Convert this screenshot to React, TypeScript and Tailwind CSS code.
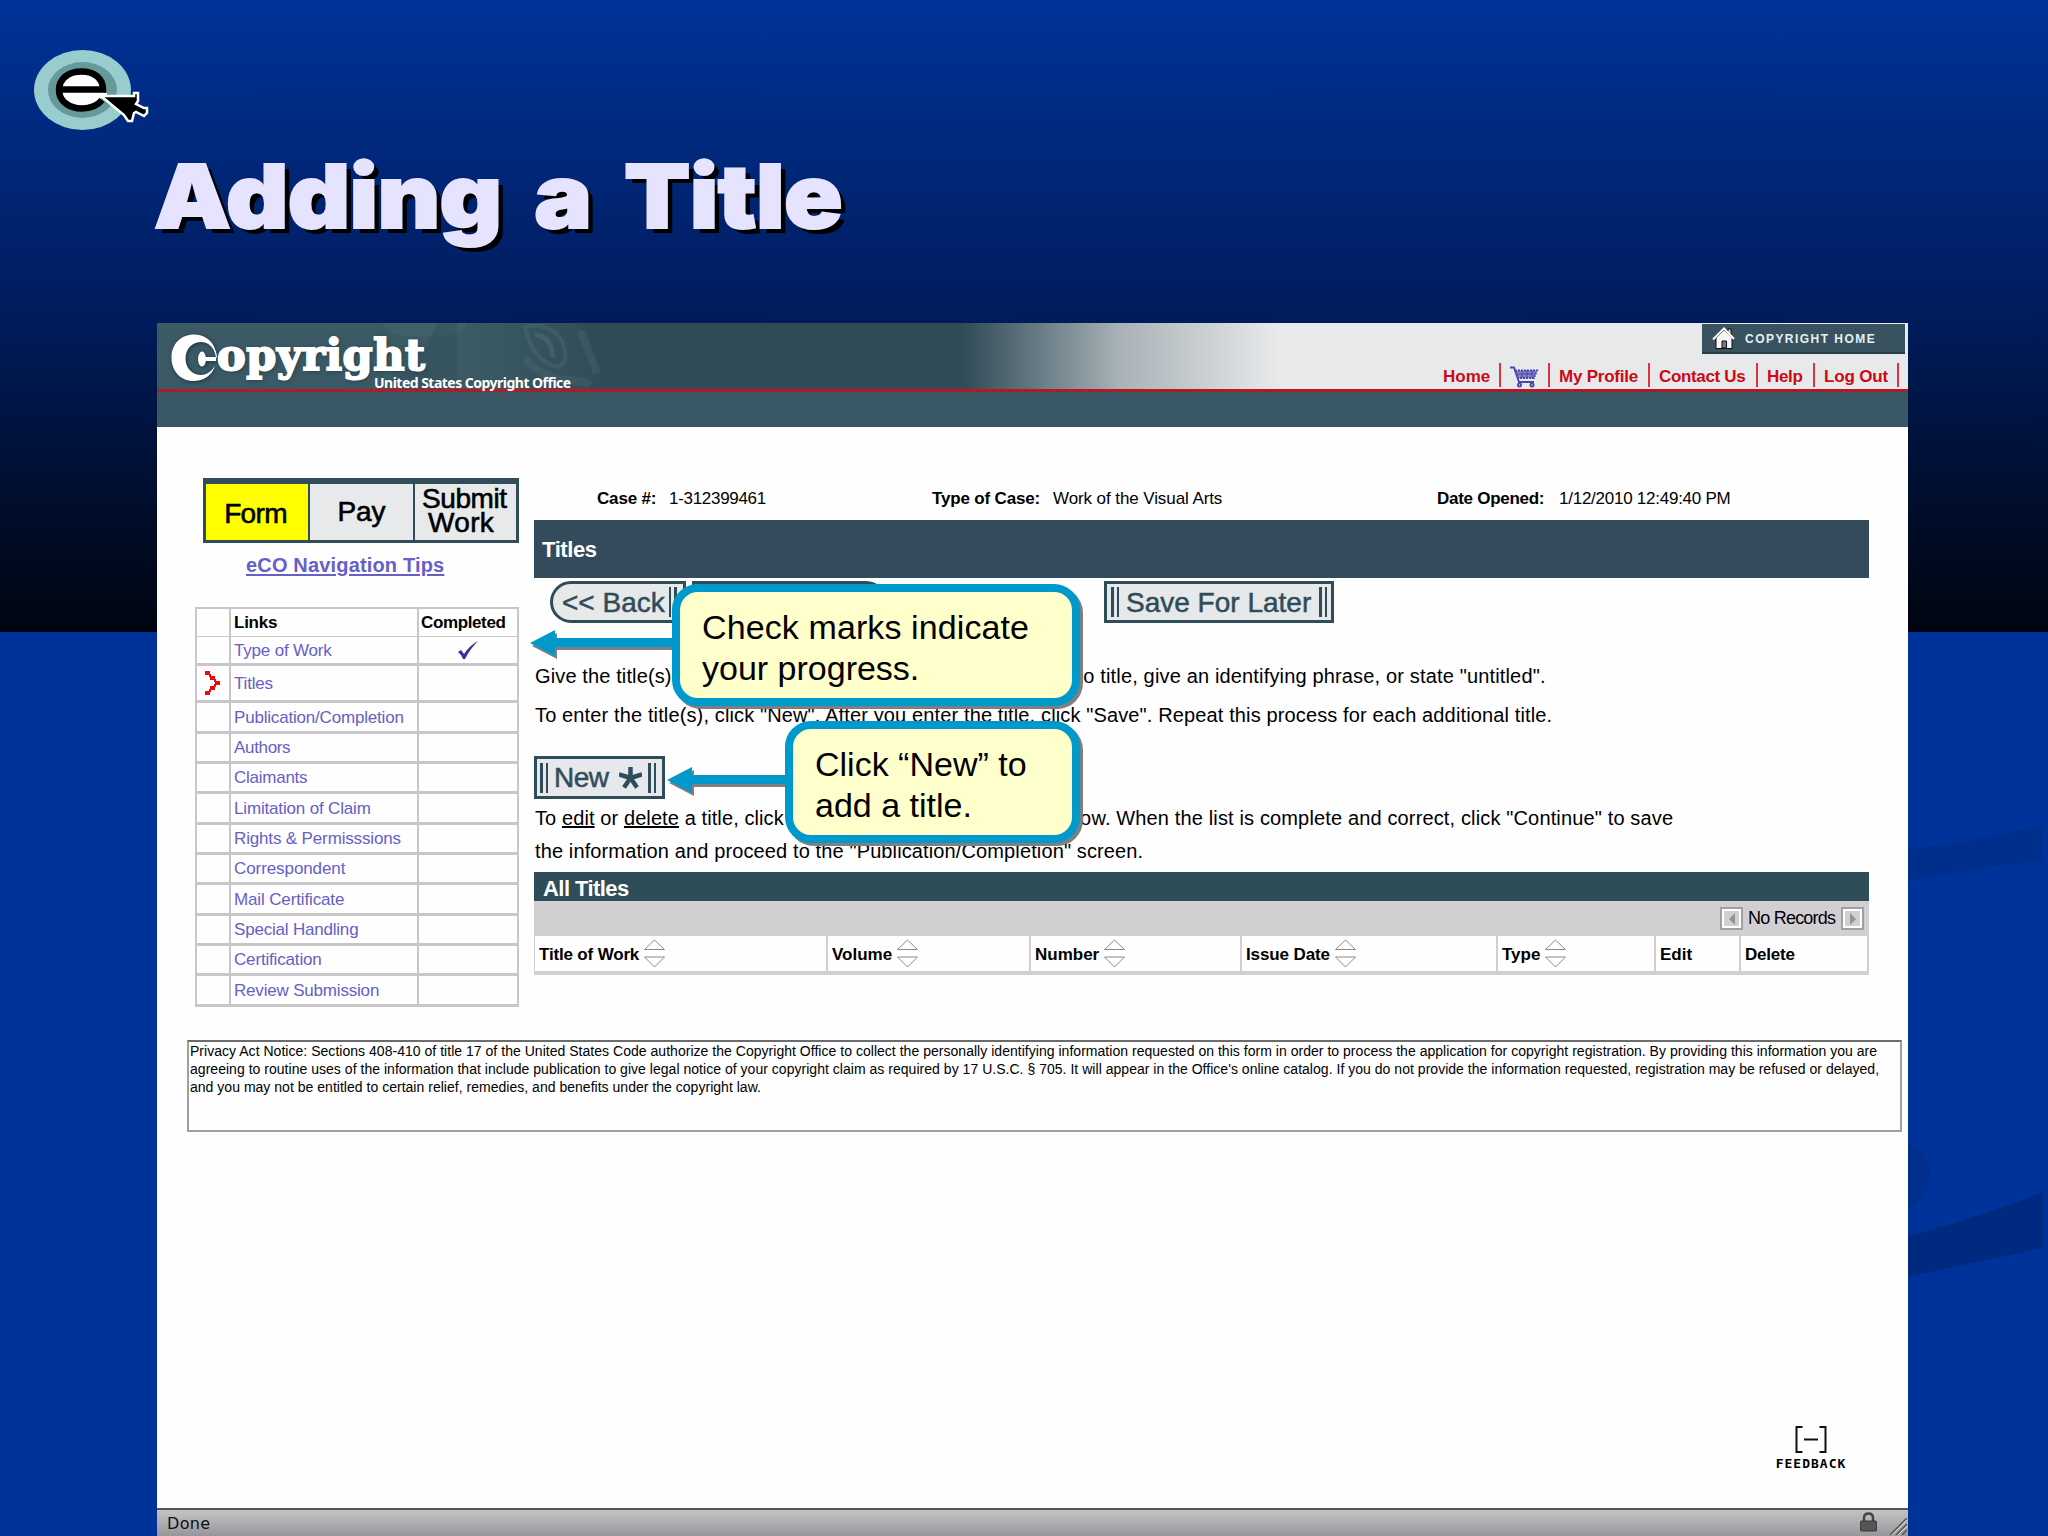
import { useLayoutEffect, useRef } from "react";
import type { ReactNode } from "react";

type FitProps = { w: number; className?: string; children: ReactNode };

// Tracks a single line of text so that it fills exactly w pixels
const Fit = ({ w, className = "", children }: FitProps) => {
  const ref = useRef<HTMLSpanElement>(null);
  useLayoutEffect(() => {
    const el = ref.current;
    if (!el) return;
    el.style.letterSpacing = "0px";
    const count = (el.textContent || "").length;
    el.style.letterSpacing = `${(w - el.offsetWidth) / Math.max(count - 1, 1)}px`;
  }, [w]);
  return (
    <span ref={ref} className={`inline-block whitespace-pre ${className}`}>
      {children}
    </span>
  );
};

const links = [
  { label: "Type of Work", w: 98, row: "h-[29px]", done: true },
  { label: "Titles", w: 39, row: "h-[37px]", current: true },
  { label: "Publication/Completion", w: 170, row: "h-[31px]" },
  { label: "Authors", w: 57, row: "h-[30px]" },
  { label: "Claimants", w: 74, row: "h-[30px]" },
  { label: "Limitation of Claim", w: 137, row: "h-[31px]" },
  { label: "Rights & Permisssions", w: 167, row: "h-[30px]" },
  { label: "Correspondent", w: 111, row: "h-[30px]" },
  { label: "Mail Certificate", w: 110, row: "h-[31px]" },
  { label: "Special Handling", w: 125, row: "h-[30px]" },
  { label: "Certification", w: 88, row: "h-[30px]" },
  { label: "Review Submission", w: 145, row: "h-[31px]" },
];

const columns = [
  { label: "Title of Work", w: 100, cell: "w-[293px]", sort: true },
  { label: "Volume", w: 60, cell: "w-[203px]", sort: true },
  { label: "Number", w: 64, cell: "w-[211px]", sort: true },
  { label: "Issue Date", w: 84, cell: "w-[256px]", sort: true },
  { label: "Type", w: 38, cell: "w-[158px]", sort: true },
  { label: "Edit", w: 32, cell: "w-[85px]" },
  { label: "Delete", w: 50, cell: "w-[128px]" },
];

const Backdrop = () => (
  <div className="absolute inset-0 bg-[#003399]">
    <div className="h-[632px] bg-linear-to-b from-[#003399] via-[#001c5c] to-[#000510]" />
    <svg className="absolute left-[1900px] top-[800px]" width="148" height="500">
      <path d="M8 49 Q80 42 143 24 V61 Q80 66 8 81Z" fill="#002e8c" />
      <path d="M8 343 Q28 350 30 374 Q28 398 8 408Z" fill="#002f8d" />
      <path d="M8 436 Q84 416 143 392 V448 L8 477Z" fill="#002a80" />
    </svg>
  </div>
);

const ECursor = () => (
  <svg className="absolute left-[30px] top-[46px]" width="124" height="90" viewBox="30 46 124 90">
    <ellipse cx="82.5" cy="90" rx="48.5" ry="40" fill="#99cccc" />
    <ellipse cx="82.5" cy="90" rx="34.5" ry="28" fill="#669999" />
    <ellipse cx="81.5" cy="90" rx="22" ry="19" fill="#fff" />
    <path
      d="M60 89.500H103C103 79 95 71.500 81.500 71.500C68 71.500 59 79 59 90C59 101 69 108.500 82 108.500C91 108.500 98 105 102 100"
      fill="none"
      stroke="#000"
      strokeWidth="6.500"
    />
    <path d="M64 93H107V97H64Z" fill="#fff" />
    <path
      d="M101 96H134L134 93H138V101L136 104L144 108L147 108V113L144 116L136 112L134 113L132 121H128L124 115Z"
      fill="#000"
      stroke="#fff"
      strokeWidth="2.500"
    />
  </svg>
);

const Logo = () => (
  <div className="relative h-[66px] w-[1000px]">
    <svg className="absolute inset-0" width="1000" height="66">
      <defs>
        <linearGradient id="face">
          <stop offset="0" stopColor="#3b5a66" />
          <stop offset="0.7" stopColor="#3b5a66" />
          <stop offset="1" stopColor="#3b5a66" stopOpacity="0" />
        </linearGradient>
      </defs>
      <path d="M0 0H425Q432 30 452 66H0Z" fill="url(#face)" />
      <path d="M225 0Q232 12 250 13H290Q308 8 310 0Z" fill="#4a6d76" opacity=".35" />
      <path d="M300 0V66H220Q260 50 280 0Z" fill="#2c4a55" opacity=".35" />
      <path d="M368 4Q392 -2 405 18Q414 40 400 44Q376 38 368 4Z" fill="none" stroke="#526f7a" strokeWidth="4" opacity=".35" />
      <path d="M378 12Q394 12 396 34" fill="none" stroke="#5d7a84" strokeWidth="5" opacity=".35" />
      <path d="M368 36Q388 58 424 58L434 62M424 8L440 50" fill="none" stroke="#4e6c78" strokeWidth="8" opacity=".3" />
    </svg>
    <svg className="absolute left-[10px] top-[8px] drop-shadow-[1px_1px_2px_#1c323b]" width="54" height="54" viewBox="167 331 54 54">
      <path
        d="M215 349C212 340 204 334.500 194 334.500C181 334.500 171.500 344 171.500 357.500C171.500 371.500 181 381 193 381C204 381 212 375 215 366C211 372 206 375 201 375C192 375 185.500 368 185.500 358.500C185.500 349 192 342 201 342C207 342 212 345 215 349Z"
        fill="#fff"
      />
      <path d="M202 341.500Q214 344 216 357.500H217Q216 343 202 339Z" fill="#fff" />
      <ellipse cx="202" cy="359" rx="4" ry="7.500" fill="#fff" />
      <path d="M202 357H216V361H202Z" fill="#fff" />
    </svg>
    <div className="absolute left-[60px] top-[8px] font-['DejaVu_Serif',serif] text-[43px] font-bold leading-[48px] text-white [-webkit-text-stroke:2px_white] [text-shadow:1px_1px_4px_#1c323b]">
      <Fit w={208}>opyright</Fit>
    </div>
    <div className="absolute left-[217px] top-[52px] font-['Noto_Sans',sans-serif] text-sm font-bold leading-[15px] text-white">
      <Fit w={197}>United States Copyright Office</Fit>
    </div>
  </div>
);

const Separator = () => <span className="h-6 w-[2px] shrink-0 bg-[#dd3340]" />;

const CartIcon = () => (
  <svg width="29" height="22" viewBox="0 0 29 22" fill="none" stroke="#4a46a8" strokeWidth="1.8">
    <path d="M0 1.500H4L9 16H24" />
    <path d="M5 4.500H27L24 12H8Z" fill="#8582cc" strokeDasharray="2 1" />
    <path d="M7 8H25M12 4V12M17 4V12M22 4V12" strokeWidth="1" />
    <circle cx="9.500" cy="19" r="1.600" />
    <circle cx="22" cy="19" r="1.600" />
  </svg>
);

const TopNav = () => (
  <div className="flex w-[465px] flex-col">
    <div className="mr-[3px] mt-px flex h-[30px] w-[203px] items-center self-end border-b-2 border-[#23404a] bg-[#38535f] pl-[10px] pt-px">
      <svg width="23" height="23" viewBox="0 0 23 23">
        <path d="M16 8V2H19V11" fill="#ddd" stroke="#111" />
        <path d="M4 11V21.500H20V11L12 3Z" fill="#f4f4f4" stroke="#111" />
        <path d="M1 12.500L12 1.500L22 12" fill="none" stroke="#fff" strokeWidth="2" />
        <path d="M10 21V14H14.500V21Z" fill="#777" stroke="#111" />
      </svg>
      <div className="ml-[10px] text-xs font-bold text-[#e6f0f4]">
        <Fit w={130}>COPYRIGHT HOME</Fit>
      </div>
    </div>
    <div className="mt-[8px] flex h-[26px] items-center text-[17px] font-bold text-[#cc0a14]">
      <div className="w-[56px] pt-[3px]"><Fit w={47}>Home</Fit></div>
      <Separator />
      <div className="w-[47px] pl-[9px] pt-1"><CartIcon /></div>
      <Separator />
      <div className="w-[98px] pl-[9px] pt-[3px]"><Fit w={79}>My Profile</Fit></div>
      <Separator />
      <div className="w-[106px] pl-[9px] pt-[3px]"><Fit w={87}>Contact Us</Fit></div>
      <Separator />
      <div className="w-[55px] pl-[9px] pt-[3px]"><Fit w={36}>Help</Fit></div>
      <Separator />
      <div className="w-[82px] pl-[9px] pt-[3px]"><Fit w={64}>Log Out</Fit></div>
      <Separator />
    </div>
  </div>
);

const Tabs = () => (
  <div className="ml-2 flex h-[65px] w-[316px] gap-[2px] bg-[#314d5a] px-[3px] pb-[3px] pt-[6px] text-[28px] leading-6 [-webkit-text-stroke:0.6px_black]">
    <div className="flex w-[102px] items-center justify-center bg-[#ffff00] pr-[3px] pt-[3px]">
      <Fit w={63}>Form</Fit>
    </div>
    <div className="flex w-[103px] items-center justify-center bg-[#e7e9eb]">
      <Fit w={48}>Pay</Fit>
    </div>
    <div className="flex w-[101px] flex-col items-start bg-[#e7e9eb] pl-[7px] pt-[3px]">
      <Fit w={85}>Submit</Fit>
      <Fit w={66} className="ml-[6px]">Work</Fit>
    </div>
  </div>
);

const CurrentMarker = () => (
  <svg width="16" height="24" fill="#ee0a0a">
    <path d="M0 0h5v4h-5zM5 5h5v4h-5zM10 10h5v4h-5zM5 15h5v4h-5zM0 20h5v4h-5z" />
    <path d="M4 3h2v3h-2zM9 8h2v3h-2zM9 13h2v3h-2zM4 18h2v3h-2z" />
  </svg>
);

const LinksTable = () => (
  <div className="mt-[21px] w-[324px] border-l-2 border-t-2 border-[#c9c6ca] text-[17px]">
    <div className="flex h-7 border-b border-[#c9c6ca] font-bold">
      <div className="w-[34px] border-r-2 border-[#c9c6ca]" />
      <div className="flex w-[188px] items-center border-r-2 border-[#c9c6ca] pl-[3px]">
        <Fit w={43}>Links</Fit>
      </div>
      <div className="flex flex-1 items-center border-r-2 border-[#c9c6ca] pl-[2px]">
        <Fit w={85}>Completed</Fit>
      </div>
    </div>
    {links.map((link) => (
      <div key={link.label} className={`flex border-b-3 border-[#c9c6ca] text-[#6660c6] ${link.row}`}>
        <div className="flex w-[34px] items-center border-r-2 border-[#c9c6ca] pl-[8px]">
          {link.current && <CurrentMarker />}
        </div>
        <div className="flex w-[188px] items-center border-r-2 border-[#c9c6ca] pl-[3px] pt-px">
          <Fit w={link.w}>{link.label}</Fit>
        </div>
        <div className="flex flex-1 items-center border-r-2 border-[#c9c6ca] pl-[39px]">
          {link.done && (
            <svg width="21" height="19" viewBox="0 0 21 19">
              <path d="M0 11L3 9L6 13Q12 4 20 0Q12 8 7 18H5Q3 13 0 11Z" fill="#37329a" />
            </svg>
          )}
        </div>
      </div>
    ))}
  </div>
);

const Bars = () => (
  <span className="flex h-[30px] w-[8px] shrink-0 justify-between">
    <span className="w-[2.5px] bg-[#2f4d58]" />
    <span className="w-[2.5px] bg-[#2f4d58]" />
  </span>
);

const ButtonRow = () => (
  <div className="mt-[3px] flex h-[42px] pl-[16px] text-[28px] text-[#2f4d58] [-webkit-text-stroke:0.5px_#2f4d58]">
    <div className="flex w-[136px] items-center rounded-l-full border-3 border-[#2f4d58] bg-[#e6e8ea] pl-[9px]">
      <Fit w={103} className="mr-[4px] pt-[2px]">{"<< Back"}</Fit>
      <Bars />
    </div>
    <div className="ml-[6px] w-[195px] rounded-r-full border-3 border-[#2f4d58] bg-[#e6e8ea]" />
    <div className="ml-[217px] flex w-[230px] items-center border-3 border-[#2f4d58] bg-[#e6e8ea] pl-[4px]">
      <Bars />
      <div className="ml-[7px] w-[193px] pt-[2px]"><Fit w={185}>Save For Later</Fit></div>
      <Bars />
    </div>
  </div>
);

const NewButton = () => (
  <div className="mt-[22px] flex h-[43px] w-[131px] items-center border-3 border-[#2f4d58] bg-[#e6e8ec] pl-[3px] text-[28px] text-[#2f4d58] [-webkit-text-stroke:0.5px_#2f4d58]">
    <Bars />
    <div className="ml-[6px] w-[65px] pt-px"><Fit w={55}>New</Fit></div>
    <svg className="mr-[6px]" width="23" height="22" viewBox="0 0 23 22" stroke="#2f4d58" strokeWidth="4.500">
      <path d="M11.500 11V0M11.500 11L0 7.500M11.500 11L23 7.500M11.500 11L5 20.500M11.500 11L18 20.500" />
    </svg>
    <Bars />
  </div>
);

const Sorter = () => (
  <svg className="ml-[5px]" width="21" height="29" viewBox="0 0 21 29" fill="none" stroke="#8a8a8a">
    <path d="M0.500 10.500L10.500 1L20.500 10.500Z" />
    <path d="M0.500 18L10.500 28L20.500 18Z" />
  </svg>
);

const PageButton = ({ d }: { d: string }) => (
  <span className="flex h-[23px] w-[23px] items-center justify-center border-2 border-[#a09ea1] bg-[#d2cfd3] outline-2 -outline-offset-4 outline-white">
    <svg width="8" height="12" fill="#949295">
      <path d={d} />
    </svg>
  </span>
);

const TitlesTable = () => (
  <div className="mt-[7px]">
    <div className="flex h-[29px] items-center bg-[#2f4d58] pl-[9px] pt-[3px] text-[22px] font-bold text-white">
      <Fit w={86}>All Titles</Fit>
    </div>
    <div className="flex h-[35px] items-center justify-end bg-[#d2cfd3] pr-[5px] text-[18px]">
      <PageButton d="M7 0V12L1 6Z" />
      <div className="w-[98px] pl-[5px]"><Fit w={88}>No Records</Fit></div>
      <PageButton d="M1 0V12L7 6Z" />
    </div>
    <div className="flex h-[39px] border-b-[4px] border-l border-[#d2cfd3] text-[17px] font-bold">
      {columns.map((col) => (
        <div key={col.label} className={`flex items-center border-r-2 border-[#d2cfd3] pl-[4px] ${col.cell}`}>
          <Fit w={col.w} className="pt-[2px]">{col.label}</Fit>
          {col.sort && <Sorter />}
        </div>
      ))}
    </div>
  </div>
);

const Main = () => (
  <main className="ml-[15px] w-[1335px] pt-[49px]">
    <div className="flex h-[44px] items-center pl-[63px] pt-[2px] text-[17px]">
      <div className="w-[72px] font-bold"><Fit w={59}>Case #:</Fit></div>
      <div className="w-[263px]"><Fit w={97}>1-312399461</Fit></div>
      <div className="w-[121px] font-bold"><Fit w={108}>Type of Case:</Fit></div>
      <div className="w-[384px]"><Fit w={169}>Work of the Visual Arts</Fit></div>
      <div className="w-[122px] font-bold"><Fit w={108}>Date Opened:</Fit></div>
      <Fit w={172}>1/12/2010 12:49:40 PM</Fit>
    </div>
    <div className="flex h-[58px] items-center bg-[#334b5a] pl-[8px] pt-px text-[22px] font-bold text-white">
      <Fit w={55}>Titles</Fit>
    </div>
    <ButtonRow />
    <div className="mt-[33px] pl-px text-[20px]">
      <div className="flex h-10 items-center">
        <div className="w-[537px]"><Fit w={136}>Give the title(s)</Fit></div>
        <Fit w={473}>no title, give an identifying phrase, or state "untitled".</Fit>
      </div>
      <div className="flex h-[38px] items-center">
        <Fit w={1017}>
          To enter the title(s), click "New". After you enter the title, click "Save". Repeat this process for each additional title.
        </Fit>
      </div>
    </div>
    <NewButton />
    <div className="pl-px text-[20px]">
      <div className="flex h-[38px] items-center">
        <div className="w-[518px]">
          <Fit w={249}>
            To <u>edit</u> or <u>delete</u> a title, click
          </Fit>
        </div>
        <Fit w={620}>below. When the list is complete and correct, click "Continue" to save</Fit>
      </div>
      <div className="flex h-7 items-center">
        <Fit w={608}>the information and proceed to the "Publication/Completion" screen.</Fit>
      </div>
    </div>
    <TitlesTable />
  </main>
);

const PrivacyNotice = () => (
  <div className="ml-[30px] mt-[33px] flex h-[92px] w-[1715px] flex-col items-start border-2 border-[#a0a0a0] border-t-[#6c6c6c] pl-px text-[14px] leading-[18px]">
    <Fit w={1687}>
      Privacy Act Notice: Sections 408-410 of title 17 of the United States Code authorize the Copyright Office to collect the personally identifying information requested on this form in order to process the application for copyright registration. By providing this information you are
    </Fit>
    <Fit w={1689}>
      agreeing to routine uses of the information that include publication to give legal notice of your copyright claim as required by 17 U.S.C. § 705. It will appear in the Office's online catalog. If you do not provide the information requested, registration may be refused or delayed,
    </Fit>
    <Fit w={571}>and you may not be entitled to certain relief, remedies, and benefits under the copyright law.</Fit>
  </div>
);

const Feedback = () => (
  <div className="ml-[1619px] mt-[294px] flex w-[70px] flex-col items-center">
    <svg width="32" height="27" fill="none" stroke="#111" strokeWidth="2">
      <path d="M7.500 1H1.500V26H7.500M24.500 1H30.500V26H24.500M9 13.500H23" />
    </svg>
    <div className="mt-[3px] font-['DejaVu_Sans_Mono',monospace] text-[13px] font-bold leading-4">
      <Fit w={70}>FEEDBACK</Fit>
    </div>
  </div>
);

const StatusBar = () => (
  <div className="mt-auto flex h-7 items-center justify-between border-t-2 border-[#555] bg-linear-to-b from-[#c4c3c5] to-[#98969a] pl-[10px] pr-px">
    <div className="pt-[2px] font-['DejaVu_Sans',sans-serif] text-[16px] leading-6 text-[#111]">
      <Fit w={43}>Done</Fit>
    </div>
    <div className="flex items-end gap-[13px]">
      <svg className="mb-[3px]" width="17" height="20" viewBox="0 0 17 20">
        <path d="M4 10V6Q4 1.500 8.500 1.500Q13 1.500 13 6V10" fill="none" stroke="#444" strokeWidth="2.500" />
        <rect x="0.500" y="9" width="16" height="10" rx="1" fill="#555" stroke="#3a3a3a" />
      </svg>
      <svg width="17" height="17" stroke="#555" strokeWidth="1.500">
        <path d="M0 17L17 0M6 17L17 6M12 17L17 12" />
        <path d="M2 17L17 2M8 17L17 8" stroke="#ddd" strokeWidth="1" />
      </svg>
    </div>
  </div>
);

const Arrow = ({ className, length }: { className: string; length: number }) => (
  <svg className={`absolute drop-shadow-[2px_3px_0_#7f7f7f] ${className}`} width={length} height="26">
    <path d={`M0 13L25 0V8H${length}V17H25V26Z`} fill="#0099cc" />
  </svg>
);

const callout =
  "absolute flex flex-col items-start rounded-[26px] border-8 border-[#0099cc] bg-[#ffffcc] pl-[22px] pt-[15px] text-[34px] leading-[41px] shadow-[3px_3px_0_#7f7f7f]";

const Callouts = () => (
  <>
    <Arrow className="left-[530px] top-[630px]" length={146} />
    <div className={`${callout} left-[672px] top-[584px] h-[122px] w-[408px]`}>
      <Fit w={327}>Check marks indicate</Fit>
      <Fit w={217}>your progress.</Fit>
    </div>
    <Arrow className="left-[667px] top-[767px]" length={122} />
    <div className={`${callout} left-[785px] top-[721px] h-[122px] w-[295px]`}>
      <Fit w={212}>Click “New” to</Fit>
      <Fit w={157}>add a title.</Fit>
    </div>
  </>
);

const App = () => {
  return (
    <div className="relative h-[1536px] w-[2048px] overflow-hidden font-['Liberation_Sans',Arial,sans-serif] text-black">
      <Backdrop />
      <div className="relative flex h-full flex-col">
        <header className="h-[323px] pl-[154px] pt-[146px]">
          <ECursor />
          <h1 className="origin-left scale-x-[1.1] font-['Inter',sans-serif] text-[88px] font-black leading-[100px] text-[#e6e3ff] [-webkit-text-stroke:2px_#e6e3ff] [text-shadow:5px_5px_0_#000] [word-spacing:13px]">
            <Fit w={626}>Adding a Title</Fit>
          </h1>
        </header>
        <div className="ml-[157px] flex h-[1213px] w-[1751px] flex-col bg-[#fefefe]">
          <div className="flex h-[66px] justify-between bg-linear-to-r from-[#2f4b57] from-46% via-[#a9b2b7] via-55% to-[#e8e9eb] to-64%">
            <Logo />
            <TopNav />
          </div>
          <div className="h-[38px] border-t-3 border-[#b01c22] bg-[#3a5766]" />
          <div className="flex">
            <aside className="ml-[38px] w-[324px] pt-[51px]">
              <Tabs />
              <div className="flex h-[43px] items-center pl-[51px] text-[20px] font-bold text-[#6660c6] underline decoration-2 underline-offset-2">
                <Fit w={198}>eCO Navigation Tips</Fit>
              </div>
              <LinksTable />
            </aside>
            <Main />
          </div>
          <PrivacyNotice />
          <Feedback />
          <StatusBar />
        </div>
      </div>
      <Callouts />
    </div>
  );
};

export default App;
